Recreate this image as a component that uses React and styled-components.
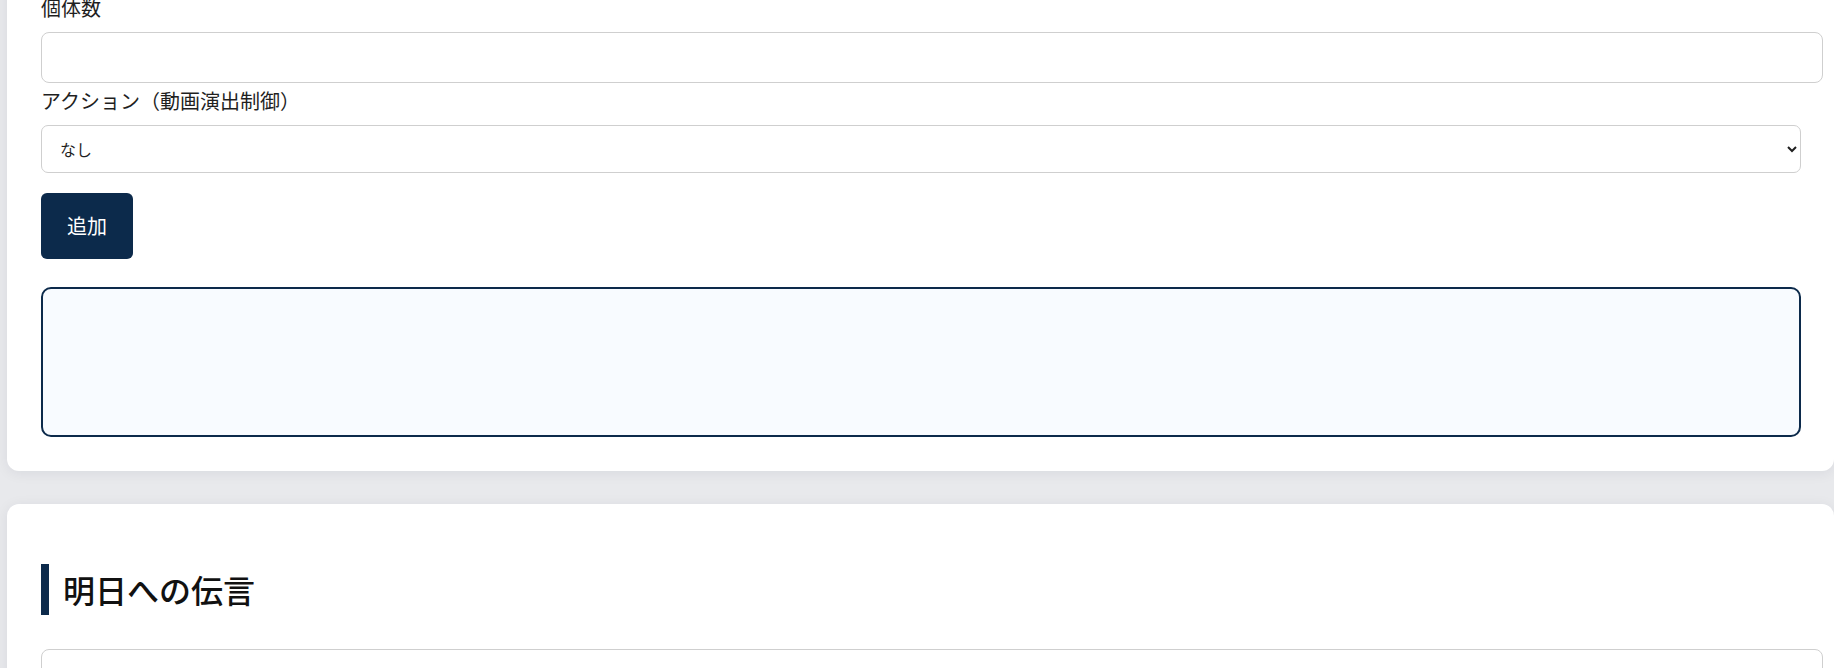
import React from "react"
import styled, { createGlobalStyle } from "styled-components"

const GlobalStyle = createGlobalStyle`
  html, body {
    margin: 0;
    background: #e8e9ec;
    font-family: "Noto Sans CJK JP", "Noto Sans", sans-serif;
    color: #1f1f1f;
    overflow: hidden;
  }
`

const Page = styled.main`
  padding-left: 7px;
  margin-top: -41px;
`

const Card = styled.section`
  background: #ffffff;
  border-radius: 12px;
  padding: 34px 33px 34px 34px;
  margin-bottom: 33px;
  box-shadow: 0 2px 14px rgba(20, 30, 50, 0.07);
`

const Label = styled.label`
  display: block;
  font-size: 20px;
  line-height: 30px;
  margin-bottom: 9px;
`

const TextInput = styled.input`
  display: block;
  box-sizing: content-box;
  width: 100%;
  height: 49px;
  padding: 0 10px;
  margin: 0 0 ${(p) => p.$gap || 0}px;
  border: 1px solid #cfcfcf;
  border-radius: 8px;
  font-size: 16px;
  font-family: inherit;
  background: #fff;
`

const Select = styled.select`
  display: block;
  box-sizing: border-box;
  width: 100%;
  height: 48px;
  padding: 0 14px;
  margin-bottom: 20px;
  border: 1px solid #cfcfcf;
  border-radius: 7px;
  background: #fff;
  font-size: 16px;
  font-family: inherit;
  color: #1f1f1f;
`

const Button = styled.button`
  display: block;
  padding: 18px 26px;
  margin-bottom: 28px;
  border: none;
  border-radius: 6px;
  background: #0c2a4b;
  color: #ffffff;
  font-size: 20px;
  line-height: 30px;
  font-family: inherit;
  cursor: pointer;
`

const Preview = styled.div`
  box-sizing: border-box;
  height: 150px;
  border: 2px solid #0c2a4b;
  border-radius: 10px;
  background: #f8fbff;
`

const Heading = styled.h2`
  margin: 26px 0 34px;
  padding-left: 14px;
  border-left: 8px solid #0c2a4b;
  font-size: 32px;
  line-height: 51px;
  font-weight: 500;
  color: #111;
`

const App = () => {
  return (
    <>
      <GlobalStyle />
      <Page>
        <Card>
          <Label>個体数</Label>
          <TextInput type="number" $gap={3} />
          <Label>アクション（動画演出制御）</Label>
          <Select defaultValue="none">
            <option value="none">なし</option>
          </Select>
          <Button>追加</Button>
          <Preview />
        </Card>
        <Card>
          <Heading>明日への伝言</Heading>
          <TextInput type="text" />
        </Card>
      </Page>
    </>
  )
}

export default App
